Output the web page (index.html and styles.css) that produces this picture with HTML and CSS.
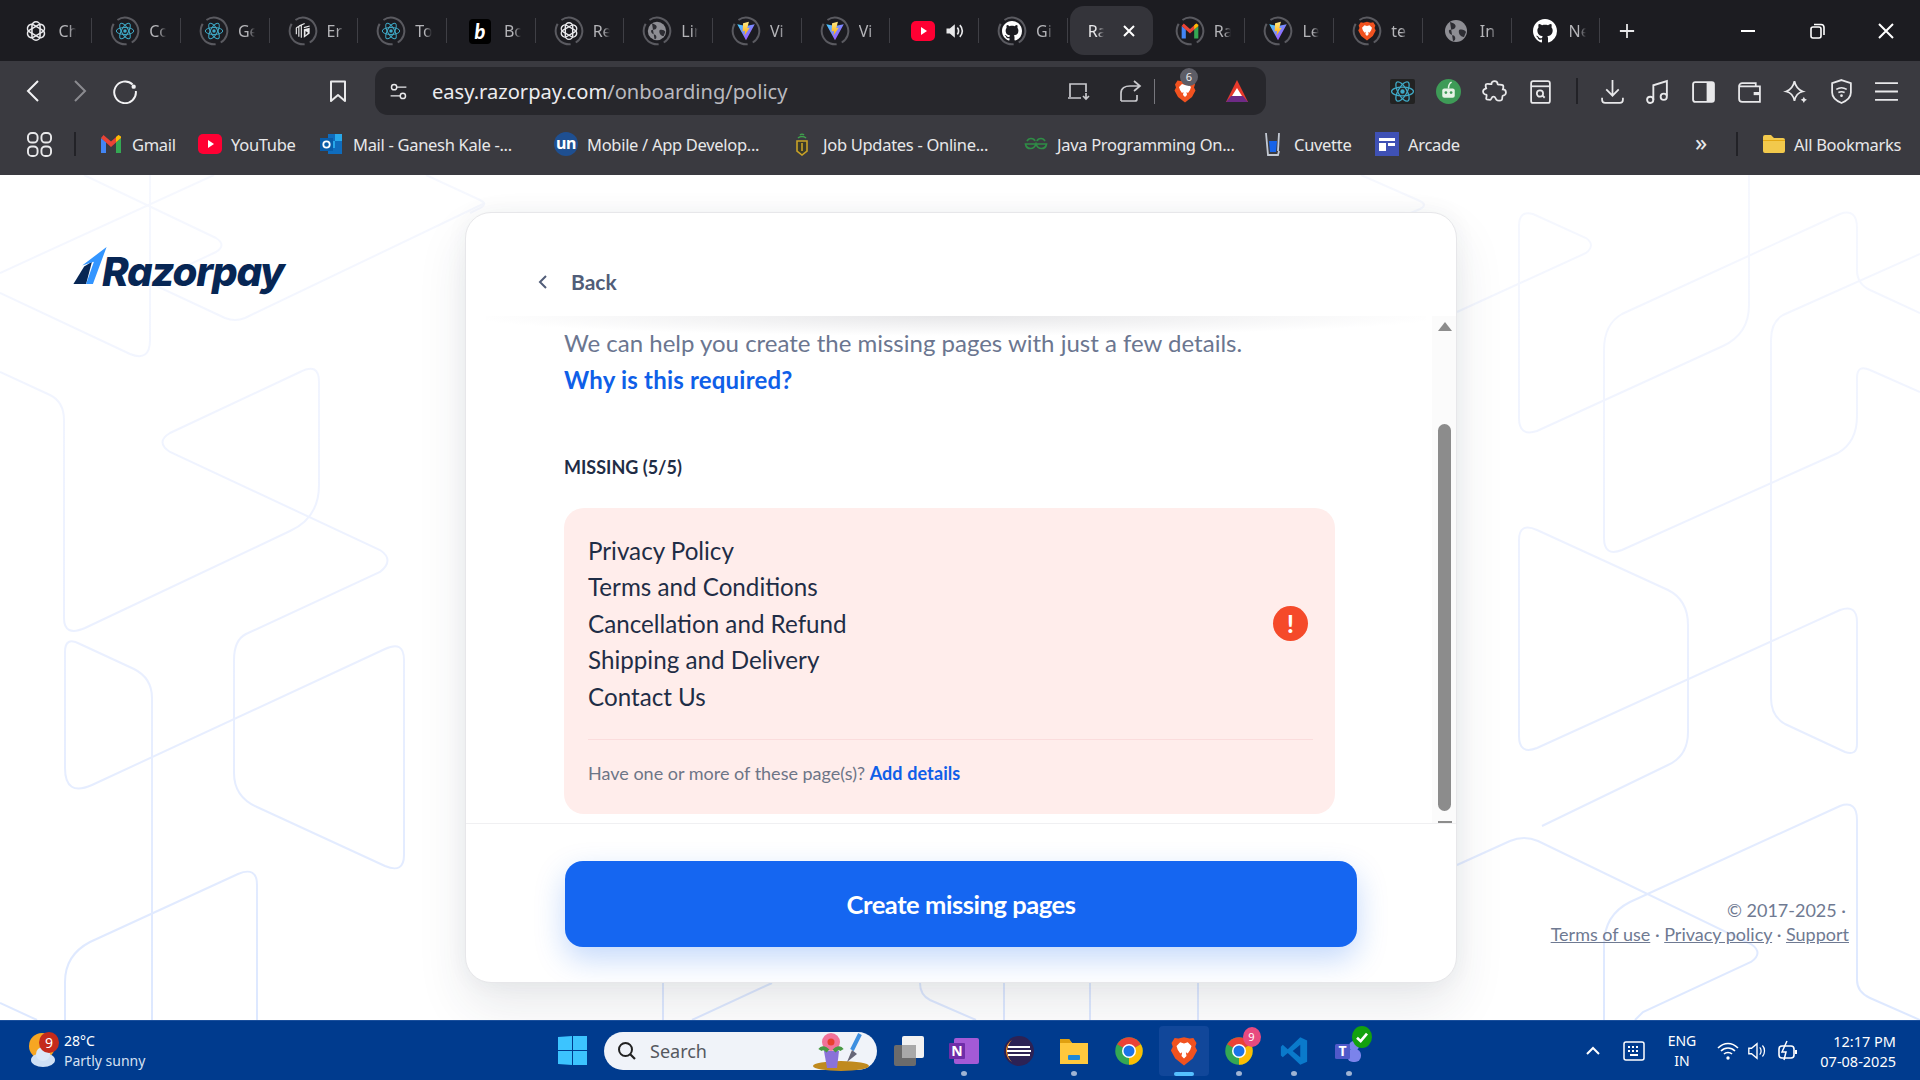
FILE: index.html
```html
<!DOCTYPE html>
<html lang="en">
<head>
<meta charset="utf-8">
<title>Razorpay</title>
<link rel="stylesheet" href="styles.css">
</head>
<body>
<svg class="defs" width="0" height="0" aria-hidden="true">
  <defs>
    <linearGradient id="vg" x1="0" y1="0" x2="1" y2="1"><stop offset="0" stop-color="#41d1ff"/><stop offset="1" stop-color="#bd34fe"/></linearGradient>
    <linearGradient id="vb" x1="0" y1="0" x2="0" y2="1"><stop offset="0" stop-color="#ffea83"/><stop offset="1" stop-color="#ffa800"/></linearGradient>
    <linearGradient id="bgl" gradientUnits="userSpaceOnUse" x1="0" y1="175" x2="0" y2="1020"><stop offset="0" stop-color="#f6f8fe"/><stop offset=".5" stop-color="#ecf1ff"/><stop offset="1" stop-color="#dde8ff"/></linearGradient>
    <symbol id="s-ring" viewBox="0 0 36 36"><circle cx="18" cy="18" r="16" fill="none" stroke="#5a5a60" stroke-width="2.4" stroke-dasharray="36 6.4" transform="rotate(-70 18 18)"/></symbol>
    <symbol id="s-react" viewBox="0 0 24 24"><g fill="none" stroke="#3fa9c6" stroke-width="1.2"><ellipse cx="12" cy="12" rx="10.5" ry="4.2"/><ellipse cx="12" cy="12" rx="10.5" ry="4.2" transform="rotate(60 12 12)"/><ellipse cx="12" cy="12" rx="10.5" ry="4.2" transform="rotate(120 12 12)"/></g><circle cx="12" cy="12" r="2.1" fill="#3fa9c6"/></symbol>
    <symbol id="s-ai" viewBox="0 0 24 24"><g fill="none" stroke="#e9e9ec" stroke-width="1.7"><rect x="7.6" y="2" width="8.8" height="20" rx="4.4"/><rect x="7.6" y="2" width="8.8" height="20" rx="4.4" transform="rotate(60 12 12)"/><rect x="7.6" y="2" width="8.8" height="20" rx="4.4" transform="rotate(120 12 12)"/></g></symbol>
    <symbol id="s-vite" viewBox="0 0 24 24"><path d="M1.5 4 12 23 22.5 4 12 6Z" fill="url(#vg)"/><path d="M15.5 1 8.5 2.6 8 12.5l3-.7-.8 5.6L16.5 8l-3 .6Z" fill="url(#vb)"/></symbol>
    <symbol id="s-gmail" viewBox="0 0 24 24"><path d="M2 6v15h5V10Z" fill="#4285f4"/><path d="M17 10v11h5V6Z" fill="#34a853"/><path d="M2 6 4.500 3 12 9.500 19.500 3 22 6l-10 9Z" fill="#ea4335"/><path d="M17 10l5-4V4.500L19.500 3 17 5Z" fill="#fbbc04"/></symbol>
    <symbol id="s-gh" viewBox="0 0 16 16"><path fill="#fff" d="M8 0C3.58 0 0 3.58 0 8c0 3.54 2.29 6.53 5.47 7.59.4.07.55-.17.55-.38 0-.19-.01-.82-.01-1.49-2.01.37-2.53-.49-2.69-.94-.09-.23-.48-.94-.82-1.13-.28-.15-.68-.52-.01-.53.63-.01 1.08.58 1.23.82.72 1.21 1.87.87 2.33.66.07-.52.28-.87.51-1.07-1.78-.2-3.64-.89-3.64-3.95 0-.87.31-1.59.82-2.15-.08-.2-.36-1.02.08-2.12 0 0 .67-.21 2.2.82.64-.18 1.32-.27 2-.27.68 0 1.36.09 2 .27 1.53-1.04 2.2-.82 2.2-.82.44 1.1.16 1.92.08 2.12.51.56.82 1.27.82 2.15 0 3.07-1.87 3.75-3.65 3.95.29.25.54.73.54 1.48 0 1.07-.01 1.93-.01 2.2 0 .21.15.46.55.38A8.013 8.013 0 0016 8c0-4.42-3.58-8-8-8z"/></symbol>
    <symbol id="s-globe" viewBox="0 0 24 24"><circle cx="12" cy="12" r="11" fill="#8e8e94"/><path d="M6 3c4 1 7 3 5 6S4 9 5 13s5 2 6 5 -1 4 -2 4M15 11c3-1 6 0 7 2l-2 5c-3 0-6-3-5-7Z" fill="#2d2d33"/></symbol>
    <symbol id="s-brave" viewBox="0 0 24 24"><path d="M12 1 16.500 2 19.500 1.500 22 5.500 21 8.500 22.500 11.500 19 18 12 23.500 5 18 1.500 11.500 3 8.500 2 5.500 4.500 1.500 7.500 2Z" fill="#f1521f"/><path d="M12 6 15 5 18 8 17 11 15 14 13.500 13 14 16 12 18 10 16 10.500 13 9 14 7 11 6 8 9 5Z" fill="#fff"/></symbol>
    <symbol id="s-er" viewBox="0 0 24 24"><path d="M12 2 21 7v10l-9 5-9-5V7Z" fill="#1a1a1e"/><path d="M4 8v8M7 6v13M10 4.500v15.500M4 8l8-4M7 6l7-3M13 8l7-2" stroke="#e8e8ea" stroke-width="1.4" fill="none"/><path d="M13 10 20 8v7l-7 5Z" fill="#e8e8ea"/><path d="M15 12v5l3-3Z" fill="#1a1a1e"/></symbol>
    <symbol id="s-yt" viewBox="0 0 24 24"><rect x="0" y="2" width="24" height="20" rx="5" fill="#ff0033"/><path d="M10 8v8l6-4Z" fill="#fff"/></symbol>
    <symbol id="s-chrome" viewBox="0 0 24 24"><circle cx="12" cy="12" r="11" fill="#34a853"/><path d="M12 12 2.500 6.500A11 11 0 0 1 21.500 6.500Z" fill="#ea4335"/><path d="M12 12 21.500 6.500A11 11 0 0 1 12 23Z" fill="#fbbc04"/><circle cx="12" cy="12" r="5.600" fill="#fff"/><circle cx="12" cy="12" r="4.400" fill="#1a73e8"/></symbol>
  </defs>
</svg>

<div class="tabstrip">
  <div class="tab"><svg class="favi"><use href="#s-ai"/></svg><span class="tt">Ch</span></div>
  <div class="tab"><span class="rung"><svg class="ring"><use href="#s-ring"/></svg><svg class="inner"><use href="#s-react"/></svg></span><span class="tt">Co</span></div>
  <div class="tab"><span class="rung"><svg class="ring"><use href="#s-ring"/></svg><svg class="inner"><use href="#s-react"/></svg></span><span class="tt">Ge</span></div>
  <div class="tab"><span class="rung"><svg class="ring"><use href="#s-ring"/></svg><svg class="inner"><use href="#s-er"/></svg></span><span class="tt">Er</span></div>
  <div class="tab"><span class="rung"><svg class="ring"><use href="#s-ring"/></svg><svg class="inner"><use href="#s-react"/></svg></span><span class="tt">To</span></div>
  <div class="tab"><span class="rung"><span class="bo">b</span></span><span class="tt">Bo</span></div>
  <div class="tab"><span class="rung"><svg class="ring"><use href="#s-ring"/></svg><svg class="inner"><use href="#s-ai"/></svg></span><span class="tt">Re</span></div>
  <div class="tab"><span class="rung"><svg class="ring"><use href="#s-ring"/></svg><svg class="inner"><use href="#s-globe"/></svg></span><span class="tt">Lin</span></div>
  <div class="tab"><span class="rung"><svg class="ring"><use href="#s-ring"/></svg><svg class="inner"><use href="#s-vite"/></svg></span><span class="tt">Vi</span></div>
  <div class="tab"><span class="rung"><svg class="ring"><use href="#s-ring"/></svg><svg class="inner"><use href="#s-vite"/></svg></span><span class="tt">Vi</span></div>
  <div class="tab"><span class="rung"><svg class="inner big"><use href="#s-yt"/></svg></span><svg class="spk" viewBox="0 0 24 24"><path d="M3 9v6h4l6 5V4L7 9Z" fill="#e8e8ea"/><path d="M16 8c2 2 2 6 0 8M19 5c4 4 4 10 0 14" stroke="#e8e8ea" stroke-width="2" fill="none"/></svg></div>
  <div class="tab"><span class="rung"><svg class="ring"><use href="#s-ring"/></svg><svg class="inner"><use href="#s-gh"/></svg></span><span class="tt">Gi</span></div>
  <div class="tab active"><span class="tt ta">Ra</span><svg class="tx" viewBox="0 0 14 14"><path d="M2 2l10 10M12 2 2 12" stroke="#fff" stroke-width="2"/></svg></div>
  <div class="tab"><span class="rung"><svg class="ring"><use href="#s-ring"/></svg><svg class="inner"><use href="#s-gmail"/></svg></span><span class="tt">Ra</span></div>
  <div class="tab"><span class="rung"><svg class="ring"><use href="#s-ring"/></svg><svg class="inner"><use href="#s-vite"/></svg></span><span class="tt">Le</span></div>
  <div class="tab"><span class="rung"><svg class="ring"><use href="#s-ring"/></svg><svg class="inner"><use href="#s-brave"/></svg></span><span class="tt">te</span></div>
  <div class="tab"><span class="rung"><svg class="inner big"><use href="#s-globe"/></svg></span><span class="tt">In</span></div>
  <div class="tab"><span class="rung"><svg class="inner big"><use href="#s-gh"/></svg></span><span class="tt">Ne</span></div>
  <svg class="plus" viewBox="0 0 18 18"><path d="M9 1v16M1 9h16" stroke="#e8e8ea" stroke-width="2"/></svg>
  <div class="winctl">
    <svg class="wc" viewBox="0 0 18 18"><path d="M2 9h14" stroke="#fff" stroke-width="2"/></svg>
    <svg class="wc" viewBox="0 0 18 18"><rect x="3" y="5" width="10" height="11" rx="2" fill="none" stroke="#fff" stroke-width="1.600"/><path d="M6 2.500h7a3 3 0 0 1 3 3V13" fill="none" stroke="#fff" stroke-width="1.600"/></svg>
    <svg class="wc" viewBox="0 0 18 18"><path d="M2 2l14 14M16 2 2 16" stroke="#fff" stroke-width="2"/></svg>
  </div>
</div>

<div class="toolbar">
  <div class="navs">
    <svg class="ti" viewBox="0 0 24 24"><path d="M16 2 6 12l10 10" fill="none" stroke="#f2f2f4" stroke-width="2"/></svg>
    <svg class="ti" viewBox="0 0 24 24"><path d="M8 2l10 10L8 22" fill="none" stroke="#8b8b90" stroke-width="2"/></svg>
    <svg class="ti rel" viewBox="0 0 24 24"><path d="M19 6A10 10 0 1 0 22 12" fill="none" stroke="#f2f2f4" stroke-width="1.800"/><circle cx="20" cy="8" r="2" fill="#f2f2f4"/></svg>
  </div>
  <svg class="ti bk" viewBox="0 0 24 24"><path d="M5 2.500h14V22l-7-6-7 6Z" fill="none" stroke="#e8e8ea" stroke-width="2" stroke-linejoin="round"/></svg>
  <div class="omni">
    <svg class="tune" viewBox="0 0 24 24"><g fill="none" stroke="#e8e8ea" stroke-width="1.700"><circle cx="7" cy="7" r="3"/><path d="M10 7h11M3 17h11"/><circle cx="17" cy="17" r="3"/></g></svg>
    <span class="url"><span class="u1">easy.razorpay.com</span>/onboarding/policy</span>
    <div class="omni-r">
      <svg class="oi ins" viewBox="0 0 24 24"><path d="M3 18V5h16v8M1 19h13" fill="none" stroke="#c9c9cd" stroke-width="1.700"/><path d="M19 14v6m-3-3 3 3 3-3" fill="none" stroke="#c9c9cd" stroke-width="1.700"/></svg>
      <svg class="oi sh" viewBox="0 0 24 24"><path d="M3 22h14a2 2 0 0 0 2-2v-4M3 22V14c0-5 4-7 9-7h9M16 2l6 5-6 5" fill="none" stroke="#c9c9cd" stroke-width="1.700"/></svg>
      <i class="vsep"></i>
      <span class="bravewrap"><svg class="oi br"><use href="#s-brave"/></svg><b class="bbadge">6</b></span>
      <svg class="oi tri" viewBox="0 0 24 24"><path d="M12 1 23 23H1Z" fill="#e8392b"/><path d="M1 23h22l-5-6H6Z" fill="#6e2a86"/><path d="M12 9l5 8H7Z" fill="#fff"/></svg>
    </div>
  </div>
  <div class="exts">
    <span class="ext"><svg class="ei rc"><use href="#s-react"/></svg></span>
    <span class="ext"><svg class="ei" viewBox="0 0 24 24"><circle cx="12" cy="12" r="12" fill="#3e9b57"/><rect x="6" y="9" width="12" height="9" rx="2" fill="#e6f2e6"/><circle cx="9.500" cy="13" r="1.300" fill="#3e9b57"/><circle cx="14.500" cy="13" r="1.300" fill="#3e9b57"/><path d="M12 9c0-3 1-5 3-6" stroke="#e6f2e6" stroke-width="1.500" fill="none"/></svg></span>
    <span class="ext"><svg class="ei" viewBox="0 0 24 24"><path d="M9 5a3 3 0 1 1 6 0c0 1 4 0 5 1s0 4 0 4c2 0 3 1 3 3s-2 3-3 3 0 3-1 4-4 1-5 0-1-3-3-3-2 3-3 3-4 0-4-1 1-4 0-4-3-1-3-3 3-3 3-3-1-3 0-4 4 0 5 0Z" fill="none" stroke="#e8e8ea" stroke-width="1.700"/></svg></span>
    <span class="ext"><svg class="ei" viewBox="0 0 24 24"><rect x="3" y="2" width="18" height="21" rx="2" fill="none" stroke="#e8e8ea" stroke-width="1.700"/><path d="M3 7h18" stroke="#e8e8ea" stroke-width="1.700"/><circle cx="11.500" cy="14" r="3" fill="none" stroke="#e8e8ea" stroke-width="1.700"/><path d="M14 16l2 2" stroke="#e8e8ea" stroke-width="1.700"/></svg></span>
    <i class="vsep dark"></i>
    <span class="ext"><svg class="ei" viewBox="0 0 24 24"><path d="M12 1v15m-6-6 6 6 6-6M2 18v2a3 3 0 0 0 3 3h14a3 3 0 0 0 3-3v-2" fill="none" stroke="#e8e8ea" stroke-width="1.700"/></svg></span>
    <span class="ext"><svg class="ei" viewBox="0 0 24 24"><path d="M8 20V6l13-4v14" fill="none" stroke="#e8e8ea" stroke-width="1.800"/><circle cx="5" cy="20" r="3" fill="none" stroke="#e8e8ea" stroke-width="1.800"/><circle cx="18" cy="17" r="3" fill="none" stroke="#e8e8ea" stroke-width="1.800"/></svg></span>
    <span class="ext"><svg class="ei" viewBox="0 0 24 24"><rect x="2" y="3" width="20" height="19" rx="2" fill="none" stroke="#e8e8ea" stroke-width="1.800"/><rect x="15" y="3" width="7" height="19" fill="#e8e8ea"/></svg></span>
    <span class="ext"><svg class="ei" viewBox="0 0 24 24"><path d="M2 7a3 3 0 0 1 3-3h13v3M2 7v12a3 3 0 0 0 3 3h17V7Z" fill="none" stroke="#e8e8ea" stroke-width="1.700"/><path d="M16 14h6" stroke="#e8e8ea" stroke-width="3"/></svg></span>
    <span class="ext"><svg class="ei" viewBox="0 0 24 24"><path d="M11 2c1 5 3 8 8 10-5 1-7 4-8 9-1-5-3-8-8-9 5-2 7-5 8-10Z" fill="none" stroke="#e8e8ea" stroke-width="1.700"/><path d="M20 17l1 2 2 1-2 1-1 2-1-2-2-1 2-1Z" fill="#e8e8ea"/></svg></span>
    <span class="ext"><svg class="ei" viewBox="0 0 24 24"><path d="M12 1l9 3v9c0 5-4 8-9 10-5-2-9-5-9-10V4Z" fill="none" stroke="#e8e8ea" stroke-width="1.700"/><path d="M7 10c3-2 7-2 10 0M9 13c2-1 4-1 6 0" fill="none" stroke="#e8e8ea" stroke-width="1.500"/><circle cx="12" cy="16" r="1.300" fill="#e8e8ea"/></svg></span>
    <span class="ext"><svg class="ei" viewBox="0 0 24 24"><path d="M1 4h22M1 12h22M1 20h22" stroke="#e8e8ea" stroke-width="1.800"/></svg></span>
  </div>
</div>

<div class="bookmarks">
  <svg class="apps" viewBox="0 0 26 26"><g fill="none" stroke="#e8e8ea" stroke-width="2"><rect x="1" y="1" width="10" height="10" rx="4"/><rect x="15" y="1" width="10" height="10" rx="4"/><rect x="1" y="15" width="10" height="10" rx="4"/><rect x="15" y="15" width="10" height="10" rx="4"/></g></svg>
  <i class="bsep"></i>
  <div class="bmlist">
    <a class="bm"><svg class="bi"><use href="#s-gmail"/></svg>Gmail</a>
    <a class="bm"><svg class="bi"><use href="#s-yt"/></svg>YouTube</a>
    <a class="bm"><svg class="bi" viewBox="0 0 24 24"><path d="M8 2h14v20H8Z" fill="#0f6cbd"/><path d="M15 2h7v7h-7ZM8 9h7v7H8Z" fill="#28a8ea"/><rect x="0" y="6" width="13" height="13" fill="#0a5ca8"/><circle cx="6.500" cy="12.500" r="3.200" fill="none" stroke="#fff" stroke-width="1.800"/></svg>Mail - Ganesh Kale -...</a>
    <a class="bm"><span class="un">un</span>Mobile / App Develop...</a>
    <a class="bm"><svg class="bi" viewBox="0 0 24 24"><path d="M7 9h10v10l-5 4-5-4Z" fill="#3a3a2a" stroke="#c9a227" stroke-width="1.600"/><path d="M12 11v8" stroke="#c9a227" stroke-width="1.600"/><path d="M8 6c2-2 6-2 8 0M10 3c1-1 3-1 4 0" fill="none" stroke="#3fa34d" stroke-width="1.500"/></svg>Job Updates - Online...</a>
    <a class="bm"><svg class="bi" viewBox="0 0 24 24"><g fill="none" stroke="#2f8d46" stroke-width="1.700"><path d="M12 12H1.500c.5 3 2.500 4.500 5 4.500S11 15 12 12c1 3 3 4.500 5.500 4.500s4.500-1.500 5-4.500H12"/><path d="M3 9c.8-1.500 2-2.500 4-2.500 2 0 3.500 1 4 2.500M13 9c.5-1.500 2-2.500 4-2.500 2 0 3.200 1 4 2.500"/></g></svg>Java Programming On...</a>
    <a class="bm"><svg class="bi" viewBox="0 0 24 24"><path d="M5 1l2 22h10l1-4" fill="none" stroke="#c3c9d3" stroke-width="1.800"/><path d="M8 9h8l-1 11H9Z" fill="#1763e8"/><path d="M18 1l-1 18" stroke="#c3c9d3" stroke-width="1.800"/></svg>Cuvette</a>
    <a class="bm"><svg class="bi" viewBox="0 0 24 24"><rect width="24" height="24" fill="#3f51b5"/><path d="M4 6h16v3H4ZM4 11h7v8H4ZM13 11h7v3h-7Z" fill="#fff"/></svg>Arcade</a>
  </div>
  <span class="chev">»</span>
  <i class="bsep s2"></i>
  <a class="bm allb"><svg class="bi" viewBox="0 0 24 24"><path d="M1 5a2 2 0 0 1 2-2h6l3 3h9a2 2 0 0 1 2 2v11a2 2 0 0 1-2 2H3a2 2 0 0 1-2-2Z" fill="#f2c94c"/><path d="M1 8h22v1H1Z" fill="#e3a712"/></svg>All Bookmarks</a>
</div>

<main class="page">
  <svg class="bglines" viewBox="0 175 1920 845" width="1920" height="845" aria-hidden="true">
    <g fill="none" stroke="url(#bgl)" stroke-width="2">
      <path d="M84 175 216 238Q227 245 216 252L150 283 225 318Q235 322 245 318L485 203"/>
      <path d="M426 175 480 200Q488 204 480 208L470 213"/>
      <path d="M0 273 214 175"/>
      <path d="M0 293 130 354Q150 362 150 340V175"/>
      <path d="M0 372 50 395Q64 402 64 420V618Q64 637 85 628L290 531Q319 518 319 485V382Q319 362 300 372L170 433Q155 442 170 452L380 550Q395 560 380 572L246 634Q234 640 234 660V773Q234 797 257 807L385 866Q404 874 404 855V660Q404 640 385 649L92 785Q65 797 65 768V652Q65 636 80 644L134 669Q152 678 152 698V1020"/>
      <path d="M257 1020V885Q257 866 238 874L90 942Q65 955 65 982V1020"/>
      <path d="M0 1003 37 1020"/>
      <path d="M663 982V1020M772 983 692 1020M920 983Q920 995 930 1000L976 1020M1004 982V1020M1090 982V1020M1198 982V1020"/>
      <path d="M1361 175 1420 201Q1428 205 1420 209L1390 222"/>
      <path d="M1457 312 1586 253Q1596 245 1586 238L1533 214Q1519 210 1519 226V418Q1519 437 1537 431L1723 346Q1749 334 1749 305V175"/>
      <path d="M1920 313 1870 290Q1857 284 1857 270V228Q1857 208 1840 214L1622 314Q1604 324 1604 350V538Q1604 557 1622 550L1838 453Q1857 442 1857 416V378Q1857 364 1870 370L1920 392"/>
      <path d="M1920 254 1783 315Q1771 322 1771 340V698Q1771 716 1785 724L1845 752Q1857 756 1857 744V622Q1857 604 1840 610L1537 748Q1519 755 1519 736V540Q1519 522 1537 530L1668 590Q1688 600 1688 625V732Q1688 756 1668 765L1542 826"/>
      <path d="M1457 865 1510 841Q1524 835 1538 841L1751 944Q1764 953 1751 962L1643 1012 1635 1020"/>
      <path d="M1604 1020V945Q1604 915 1630 902L1840 806Q1857 800 1857 820V980Q1857 992 1870 998L1920 1020"/>
    </g>
  </svg>
  <div class="logocol">
    <div class="logo">
      <svg class="logomark" viewBox="0 0 34 40"><path d="M0 38 11 20 19 15 13 38Z" fill="#072654"/><path d="M34 0 9 19 21 15 13 38H20L34 0Z" fill="#3395ff"/></svg>
      <span class="logotext">Razorpay</span>
    </div>
  </div>
  <section class="card">
    <header class="cardhead">
      <svg class="backi" viewBox="0 0 12 16"><path d="M9 2 3 8l6 6" fill="none" stroke="#515d78" stroke-width="2"/></svg>
      <span class="backt">Back</span>
    </header>
    <div class="scrollarea">
      <div class="headshadow"></div>
      <div class="scrollcontent">
        <p class="lead">We can help you create the missing pages with just a few details.</p>
        <a class="why">Why is this required?</a>
        <h2 class="missing">MISSING (5/5)</h2>
        <div class="pink">
          <div class="pinktop">
            <ul class="plist">
              <li>Privacy Policy</li>
              <li>Terms and Conditions</li>
              <li>Cancellation and Refund</li>
              <li>Shipping and Delivery</li>
              <li>Contact Us</li>
            </ul>
            <span class="alert">!</span>
          </div>
          <p class="have">Have one or more of these page(s)? <a class="add">Add details</a></p>
        </div>
      </div>
      <div class="sb">
        <i class="sb-up"></i>
        <i class="sb-thumb"></i>
        <i class="sb-down"></i>
      </div>
    </div>
    <div class="cardfoot">
      <button class="cta">Create missing pages</button>
    </div>
  </section>
  <footer class="legal">
    <div>© 2017-2025 ·</div>
    <div><a>Terms of use</a> · <a>Privacy policy</a> · <a>Support</a></div>
  </footer>
</main>

<div class="taskbar">
  <div class="weather">
    <span class="wicon">
      <svg viewBox="0 0 28 38"><circle cx="14" cy="14" r="13" fill="#f6a623"/><ellipse cx="15" cy="28" rx="12" ry="7" fill="#cfe0f5"/><circle cx="15" cy="22" r="7" fill="#dbe8f8"/></svg>
      <b class="w9">9</b>
    </span>
    <div class="wtext"><div>28°C</div><div class="wsub">Partly sunny</div></div>
  </div>
  <svg class="winlogo" viewBox="0 0 29 29"><path d="M0 1 14 0V14H0ZM15 0 29 0V14H15ZM0 15H14V29L0 28ZM15 15H29V29H15Z" fill="#3cc4ff"/></svg>
  <div class="search">
    <svg class="sq" viewBox="0 0 20 20"><circle cx="8.500" cy="8.500" r="6.500" fill="none" stroke="#222" stroke-width="2"/><path d="M13 13l5 5" stroke="#222" stroke-width="2.200"/></svg>
    <span class="stext">Search</span>
    <svg class="flower" viewBox="0 0 60 40"><ellipse cx="32" cy="34" rx="28" ry="5" fill="#c08a1e"/><path d="M15 19h15l-2 17H18Z" fill="#8a72d8"/><circle cx="22" cy="10" r="9" fill="#f2729a"/><circle cx="22" cy="10" r="3.500" fill="#e8402f"/><path d="M11 18c2-3 5-2 8 1M33 18c-2-3-5-2-8 1" stroke="#4a9a45" stroke-width="4" fill="none"/><path d="M51 2 43 18" stroke="#3d8fe0" stroke-width="4"/><path d="M43 18l-5 12 10-8Z" fill="#667"/></svg>
  </div>
  <div class="apps-tk">
    <span class="tk"><svg viewBox="0 0 30 30"><rect x="0" y="9" width="22" height="21" rx="2" fill="#6b6b6b"/><rect x="8" y="0" width="22" height="22" rx="2" fill="#f2f2f2"/><rect x="8" y="9" width="14" height="13" fill="#a9a9a9"/></svg></span>
    <span class="tk dot"><svg viewBox="0 0 30 30"><rect x="5" y="2" width="25" height="26" rx="2" fill="#a45ad6"/><rect x="0" y="7" width="16" height="16" rx="1" fill="#6f2da8"/><text class="svgt" x="8" y="20" text-anchor="middle">N</text></svg></span>
    <span class="tk"><svg viewBox="0 0 30 30"><circle cx="15" cy="15" r="15" fill="#2c2255"/><path d="M2 15A13 13 0 0 1 8 4 15 15 0 0 0 8 26 13 13 0 0 1 2 15Z" fill="#f7941e"/><path d="M4 11h22M3 15h24M4 19h22" stroke="#fff" stroke-width="2.200"/></svg></span>
    <span class="tk dot"><svg viewBox="0 0 30 30"><path d="M1 3h9l3 4h16v21H1Z" fill="#ffc83d"/><path d="M1 3h9l3 4H1Z" fill="#e0a010"/><rect x="9" y="19" width="12" height="5" rx="1" fill="#1e88d8"/></svg></span>
    <span class="tk"><svg><use href="#s-chrome"/></svg></span>
    <span class="tk act"><svg><use href="#s-brave"/></svg></span>
    <span class="tk dot"><svg><use href="#s-chrome"/></svg><b class="tkb">9</b></span>
    <span class="tk dot"><svg viewBox="0 0 24 24"><path d="M17 1 22.500 3.500V20.500L17 23 7 13.500 3 17 1.500 15.500V8.500L3 7 7 10.500Z" fill="#0a7acb"/><path d="M17 7 11 12l6 5Z" fill="#003b8e"/></svg></span>
    <span class="tk dot"><svg viewBox="0 0 30 30"><circle cx="20" cy="10" r="5" fill="#7b83eb"/><rect x="13" y="13" width="14" height="13" rx="6" fill="#7b83eb"/><rect x="1" y="8" width="15" height="15" rx="1.500" fill="#5059c9"/><text class="svgt" x="8.500" y="20" text-anchor="middle">T</text></svg><b class="tkc"><svg viewBox="0 0 12 12"><path d="M3 6.500 5.200 8.500 9 4" fill="none" stroke="#fff" stroke-width="1.600"/></svg></b></span>
  </div>
  <div class="tray">
    <svg class="tr up" viewBox="0 0 16 16"><path d="M2 11l6-6 6 6" fill="none" stroke="#fff" stroke-width="2"/></svg>
    <svg class="tr kb" viewBox="0 0 22 22"><rect x="1" y="2" width="20" height="18" rx="2" fill="none" stroke="#fff" stroke-width="1.500"/><path d="M5 7h2M9 7h2M13 7h2M5 11h2M9 11h2M13 11h2M7 15h8" stroke="#fff" stroke-width="1.800"/></svg>
    <div class="lang"><div>ENG</div><div>IN</div></div>
    <svg class="tr wifi" viewBox="0 0 22 22"><path d="M1 8c6-6 14-6 20 0M4 11c4-4 10-4 14 0M7 14c2-2 6-2 8 0" fill="none" stroke="#fff" stroke-width="1.600"/><circle cx="11" cy="18" r="1.700" fill="#fff"/></svg>
    <svg class="tr vol" viewBox="0 0 22 22"><path d="M2 8v6h3l6 5V3L5 8Z" fill="none" stroke="#fff" stroke-width="1.500"/><path d="M14 7c2 2 2 6 0 8M17 5c3 3 3 9 0 12" fill="none" stroke="#fff" stroke-width="1.400"/></svg>
    <svg class="tr bat" viewBox="0 0 22 22"><rect x="2" y="6" width="15" height="12" rx="3" fill="none" stroke="#fff" stroke-width="1.600"/><path d="M18 10h2v4h-2" fill="#fff"/><path d="M10 1 5 12h4l-2 8" fill="none" stroke="#fff" stroke-width="1.500"/></svg>
    <div class="clock"><div>12:17 PM</div><div>07-08-2025</div></div>
  </div>
</div>
</body>
</html>
```
FILE: styles.css
```css
* { box-sizing: border-box; }
html, body { margin: 0; height: 100%; }
body {
  width: 1920px; height: 1080px; overflow: hidden;
  display: flex; flex-direction: column;
  font-family: "Noto Sans", sans-serif; background: #fff; color: #e8e8ea;
}
.defs { position: absolute; }
p, h2, ul { margin: 0; padding: 0; }

/* tab strip */
.tabstrip { height: 61px; background: #1c1c21; display: flex; align-items: center; padding-left: 3.5px; flex: none; }
.tab { width: 88.7px; height: 49px; flex: none; display: flex; align-items: center; padding-left: 18px; position: relative; }
.tab::after { content: ""; position: absolute; right: 0; top: 12px; height: 25px; width: 1px; background: #3f3f45; }
.tab:first-child { padding-left: 22px; }
.favi { width: 22px; height: 22px; margin-right: 12px; margin-left: -1px; flex: none; }
.rung { width: 30px; height: 30px; position: relative; display: block; margin-right: 9px; flex: none; }
.ring { position: absolute; inset: 0; width: 30px; height: 30px; }
.inner { position: absolute; left: 5px; top: 5px; width: 20px; height: 20px; }
.inner.big { left: 3px; top: 3px; width: 24px; height: 24px; }
.bo { position: absolute; left: 4px; top: 3px; width: 22px; height: 25px; background: #000; border-radius: 4px; color: #fff; font: italic 900 20px/25px "Lato", sans-serif; text-align: center; }
.tt { width: 17px; overflow: hidden; white-space: nowrap; font-size: 16px; color: #b4b4b8; -webkit-mask-image: linear-gradient(90deg, #000 60%, transparent); mask-image: linear-gradient(90deg, #000 60%, transparent); }
.spk { width: 20px; height: 20px; margin-left: -3px; }
.tab.active { background: #34343a; border-radius: 14px; padding-left: 18px; width: 83px; margin: 0 4px 0 2px; }
.tab.active::after { display: none; }
.ta { color: #e8e8ea; width: 16px; }
.tx { width: 14px; height: 14px; margin-left: 18px; }
.plus { width: 16px; height: 16px; margin-left: 19px; flex: none; }
.winctl { margin-left: auto; display: flex; padding-right: 25px; gap: 51px; }
.wc { width: 18px; height: 18px; }

/* toolbar */
.toolbar { height: 57px; background: #3a3a40; display: flex; align-items: center; flex: none; padding-top: 3px; }
.navs { display: flex; align-items: center; width: 326px; padding-left: 22px; gap: 21px; flex: none; }
.ti { width: 24px; height: 24px; flex: none; }
.rel { width: 26px; height: 26px; }
.bk { margin-right: 25px; width: 24px; height: 24px; }
.omni { width: 891px; height: 48px; background: #27272c; border-radius: 13px; display: flex; align-items: center; padding-left: 13px; flex: none; }
.tune { width: 21px; height: 21px; flex: none; }
.url { margin-left: 23px; font-size: 20.100px; color: #b9b9bf; white-space: nowrap; }
.u1 { color: #ececef; }
.omni-r { margin-left: auto; display: flex; align-items: center; padding-right: 17px; }
.oi { width: 24px; height: 24px; display: block; }
.ins { margin-right: -2px; }
.sh { margin-left: 29px; }
.vsep { width: 1px; height: 25px; background: #77777d; margin: 0 18px 0 12px; flex: none; }
.bravewrap { position: relative; display: block; }
.bbadge { position: absolute; left: 7px; top: -11px; width: 18px; height: 18px; border-radius: 9px; background: #5d5d66; font: 400 11px/18px "Noto Sans", sans-serif; text-align: center; color: #eee; }
.tri { margin-left: 28px; }
.exts { display: flex; align-items: center; margin-left: 114px; }
.ext { width: 45.800px; display: flex; justify-content: center; flex: none; }
.ei { width: 25px; height: 25px; }
.rc { background: #222; border-radius: 2px; }
.vsep.dark { background: #222227; width: 2px; height: 26px; margin: 0 11px 0 13px; }

/* bookmarks */
.bookmarks { height: 57px; background: #3a3a40; display: flex; align-items: center; padding-left: 27px; flex: none; padding-bottom: 5px; }
.apps { width: 25px; height: 25px; flex: none; }
.bsep { width: 2px; height: 24px; background: #222227; margin-left: 22px; flex: none; }
.bmlist { display: grid; grid-template-columns: 99px 122px 234px 236px 234px 237px 114px 100px; margin-left: 23px; flex: none; }
.bm { display: flex; align-items: center; gap: 9px; font-size: 16.500px; color: #e8e8ea; white-space: nowrap; letter-spacing: -.3px; }
.bi { width: 24px; height: 24px; flex: none; }
.un { width: 24px; height: 24px; border-radius: 12px; background: #1e4f91; color: #fff; font: 700 16px/22px "Noto Sans", sans-serif; text-align: center; flex: none; }
.chev { font-size: 24px; margin-left: 220px; line-height: 24px; width: 20px; flex: none; margin-top: -4px; }
.s2 { margin-left: 21px; }
.allb { margin-left: 24px; gap: 8px; }

/* main page */
.page { flex: 1; display: flex; position: relative; overflow: hidden; background: #fff; font-family: "Lato", sans-serif; align-items: flex-start; }
.bglines { position: absolute; left: 0; top: 0; }
.logocol { width: 465px; flex: none; position: relative; padding: 72px 0 0 73px; }
.logo { display: flex; align-items: flex-end; }
.logomark { width: 34px; height: 39px; flex: none; }
.logotext { font: italic 800 40.300px/38px "Inter", sans-serif; color: #072654; letter-spacing: -1.300px; margin-left: -5px; position: relative; top: 5px; }

.card { width: 992px; height: 771px; margin-top: 37px; flex: none; background: #fff; border: 1px solid #e7e7ea; border-radius: 26px; position: relative; box-shadow: 0 24px 50px rgba(40, 50, 70, .10), 0 0 22px rgba(40, 50, 70, .05); display: flex; flex-direction: column; overflow: hidden; }
.cardhead { height: 103px; flex: none; display: flex; align-items: center; padding: 34px 0 0 71px; }
.backi { width: 12px; height: 16px; }
.backt { margin-left: 22px; font-size: 21px; font-weight: 700; color: #515d78; }
.scrollarea { flex: 1; position: relative; overflow: hidden; border-bottom: 1px solid #f0f0f2; }
.headshadow { position: absolute; left: 20px; right: 30px; top: 0; height: 20px; background: radial-gradient(ellipse 52% 100% at 50% 0, #e7e7e9, rgba(255, 255, 255, 0)); }
.scrollcontent { padding: 9px 0 0 98px; width: 869px; }
.lead { font-size: 24px; line-height: 36px; color: #6b7690; white-space: nowrap; }
.why { display: block; font-size: 24px; line-height: 36px; color: #0f5fe8; font-weight: 700; margin-top: 1px; letter-spacing: .2px; }
.missing { margin-top: 57px; font-size: 18px; line-height: 24px; font-weight: 700; color: #1f2d46; }
.pink { margin-top: 29px; width: 771px; height: 306px; background: #ffedeb; border-radius: 20px; padding: 25px 22px 0 24px; }
.pinktop { height: 207px; display: flex; align-items: flex-start; justify-content: space-between; border-bottom: 1px solid #fbdcdc; }
.plist { list-style: none; }
.plist li { font-size: 24.200px; line-height: 36.400px; color: #1f2d46; }
.alert { width: 35px; height: 35px; border-radius: 50%; background: #f54a2a; color: #fff; font-weight: 900; font-size: 24px; line-height: 35px; text-align: center; margin-top: 73px; margin-right: 5px; }
.have { margin-top: 21px; font-size: 18px; line-height: 24px; color: #6d7587; }
.add { color: #0f5fe8; font-weight: 700; letter-spacing: .1px; }
.sb { position: absolute; right: 0; top: 0; bottom: 0; width: 24px; background: #fbfbfb; }
.sb-up { position: absolute; left: 6px; top: 6px; border: 7px solid transparent; border-top: 0; border-bottom: 9px solid #8c8c8c; }
.sb-thumb { position: absolute; left: 6px; top: 108px; width: 13px; height: 387px; border-radius: 7px; background: #8c8c8c; }
.sb-down { position: absolute; left: 6px; bottom: 0; width: 14px; height: 2px; background: #8c8c8c; }
.cardfoot { height: 158px; flex: none; padding: 37px 0 0 99px; }
.cta { width: 792px; height: 86px; border: 0; border-radius: 18px; background: #1566f1; color: #fff; font: 700 25.500px "Lato", sans-serif; letter-spacing: -.45px; box-shadow: 0 12px 30px rgba(21, 102, 241, .25); }
.legal { flex: 1; align-self: flex-end; padding: 0 71px 74px 0; text-align: right; font-size: 18px; line-height: 24px; color: #6f7a92; position: relative; }
.legal div:first-child { padding-right: 3px; }
.legal a { text-decoration: underline; }

/* taskbar */
.taskbar { height: 60px; flex: none; background: #003b8e; border-top: 1px solid #1a4f9c; display: flex; align-items: center; color: #fff; font-family: "Noto Sans", sans-serif; position: relative; }
.weather { width: 558px; flex: none; display: flex; align-items: center; padding-left: 28px; }
.wicon { width: 28px; height: 38px; position: relative; display: block; }
.wicon svg { width: 28px; height: 38px; display: block; }
.w9 { position: absolute; left: 11px; top: 0; width: 20px; height: 21px; background: #c42b1c; border-radius: 50%; font: 400 14px/21px "Noto Sans", sans-serif; text-align: center; }
.wtext { margin-left: 8px; font-size: 14px; line-height: 20px; }
.wsub { color: #d5e0f2; }
.winlogo { width: 29px; height: 29px; flex: none; }
.search { width: 273px; height: 38px; border-radius: 19px; margin-left: 17px; background: #f0f3f9; display: flex; align-items: center; padding-left: 13px; flex: none; position: relative; }
.sq { width: 20px; height: 20px; }
.stext { margin-left: 13px; font-size: 18px; color: #55585f; }
.flower { width: 60px; height: 40px; position: absolute; right: 8px; top: 0; }
.apps-tk { display: flex; margin-left: 4.500px; flex: none; }
.tk { width: 55px; height: 50px; position: relative; display: flex; align-items: center; justify-content: center; }
.tk > svg { width: 30px; height: 30px; }
.tk.dot::after { content: ""; position: absolute; left: 24.500px; bottom: 0; width: 6px; height: 5px; border-radius: 50%; background: #9fb4d4; }
.tk.act { background: #11479a; border-radius: 4px; width: 50px; margin: 0 2.500px; }
.tk.act::after { content: ""; position: absolute; left: 15px; bottom: 0; width: 20px; height: 4px; border-radius: 2px; background: #55c0ff; }
.tkb { position: absolute; right: 6px; top: 1px; width: 18px; height: 20px; border-radius: 50%; background: #e84a7f; font: 400 11px/20px "Noto Sans", sans-serif; text-align: center; }
.tkc { position: absolute; right: 5px; top: 0; width: 20px; height: 22px; border-radius: 50%; background: #13a10e; display: block; }
.tkc svg { width: 20px; height: 22px; display: block; }
.svgt { font: 700 14px "Noto Sans", sans-serif; fill: #fff; }
.tray { margin-left: auto; display: flex; align-items: center; padding-right: 24px; }
.tr { flex: none; }
.up { width: 16px; height: 16px; }
.kb { width: 22px; height: 22px; margin-left: 22px; }
.lang { width: 50px; margin-left: 12px; text-align: center; font-size: 14px; line-height: 20px; }
.wifi { width: 22px; height: 22px; margin-left: 10px; }
.vol { width: 20px; height: 20px; margin-left: 8px; }
.bat { width: 22px; height: 22px; margin-left: 10px; }
.clock { width: 85px; margin-left: 12px; text-align: right; font-size: 14.500px; line-height: 20px; white-space: nowrap; }
```
